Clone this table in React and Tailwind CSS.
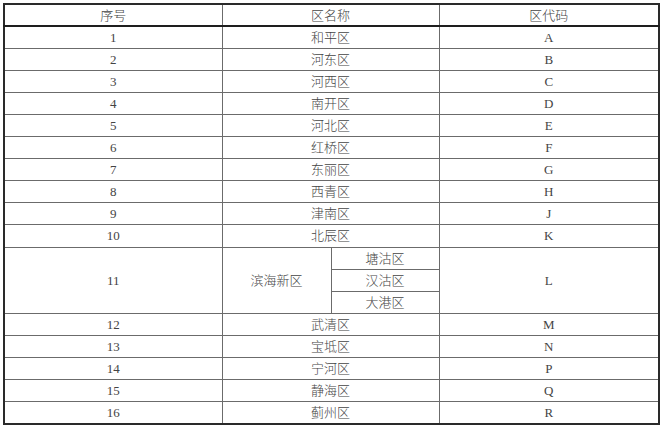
const ROWS = [
  ['1', '和平区', 'A'],
  ['2', '河东区', 'B'],
  ['3', '河西区', 'C'],
  ['4', '南开区', 'D'],
  ['5', '河北区', 'E'],
  ['6', '红桥区', 'F'],
  ['7', '东丽区', 'G'],
  ['8', '西青区', 'H'],
  ['9', '津南区', 'J'],
  ['10', '北辰区', 'K'],
]

const ROWS_AFTER = [
  ['12', '武清区', 'M'],
  ['13', '宝坻区', 'N'],
  ['14', '宁河区', 'P'],
  ['15', '静海区', 'Q'],
  ['16', '蓟州区', 'R'],
]

const cell = 'border border-[#6b6b6b] h-[22.1px] p-0 text-center align-middle font-light'

export default function App() {
  return (
    <div
      className="w-[661px] h-[429px] bg-white pl-[3px] pt-[3px] text-[13px] text-[#444] leading-none"
      style={{ fontFamily: '"Liberation Serif", "Noto Sans CJK SC", serif' }}
    >
      <table className="border-collapse table-fixed w-[655px] border-2 border-[#2a2a2a]">
        <colgroup>
          <col className="w-[218px]" />
          <col className="w-[109px]" />
          <col className="w-[108px]" />
          <col className="w-[220px]" />
        </colgroup>
        <thead>
          <tr>
            <th className={cell + ' border-b-2 border-b-[#1e1e1e]'}>序号</th>
            <th colSpan={2} className={cell + ' border-b-2 border-b-[#1e1e1e]'}>区名称</th>
            <th className={cell + ' border-b-2 border-b-[#1e1e1e]'}>区代码</th>
          </tr>
        </thead>
        <tbody>
          {ROWS.map(([n, name, code]) => (
            <tr key={n}>
              <td className={cell}>{n}</td>
              <td colSpan={2} className={cell}>{name}</td>
              <td className={cell}>{code}</td>
            </tr>
          ))}
          <tr>
            <td rowSpan={3} className={cell}>11</td>
            <td rowSpan={3} className={cell}>滨海新区</td>
            <td className={cell}>塘沽区</td>
            <td rowSpan={3} className={cell}>L</td>
          </tr>
          <tr>
            <td className={cell}>汉沽区</td>
          </tr>
          <tr>
            <td className={cell}>大港区</td>
          </tr>
          {ROWS_AFTER.map(([n, name, code]) => (
            <tr key={n}>
              <td className={cell}>{n}</td>
              <td colSpan={2} className={cell}>{name}</td>
              <td className={cell}>{code}</td>
            </tr>
          ))}
        </tbody>
      </table>
    </div>
  )
}
